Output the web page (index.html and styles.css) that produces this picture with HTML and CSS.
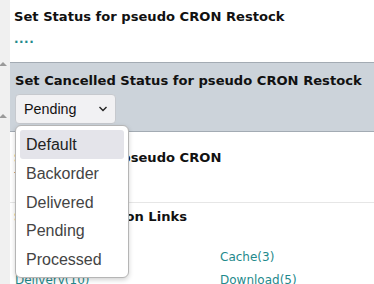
FILE: index.html
```html
<!DOCTYPE html>
<html>
<head>
<meta charset="utf-8">
<link rel="stylesheet" href="styles.css">
</head>
<body>
<div class="page">
  <aside class="strip">
    <span class="tri tri-a"></span>
    <span class="tri tri-b"></span>
  </aside>
  <main class="main">
    <section class="sec sec-1">
      <h3 class="title">Set Status for pseudo CRON Restock</h3>
      <div class="dots">....</div>
    </section>
    <section class="sec sec-2">
      <h3 class="title">Set Cancelled Status for pseudo CRON Restock</h3>
      <div class="select-wrap">
        <div class="select">
          <span>Pending</span>
          <svg class="chev" width="10" height="6" viewBox="0 0 10 6"><path d="M1.5 1 L5 4.5 L8.5 1" fill="none" stroke="#222" stroke-width="1.4"/></svg>
        </div>
        <ul class="menu">
          <li class="opt active">Default</li>
          <li class="opt">Backorder</li>
          <li class="opt">Delivered</li>
          <li class="opt">Pending</li>
          <li class="opt">Processed</li>
        </ul>
      </div>
    </section>
    <section class="sec sec-3">
      <h3 class="title">Set Status for pseudo CRON</h3>
      <div class="mark">-</div>
    </section>
    <section class="sec sec-4">
      <h3 class="title">Set Configuration Links</h3>
      <div class="links">
        <a class="lnk" href="#">Backorder(2)</a>
        <a class="lnk" href="#">Cache(3)</a>
        <a class="lnk" href="#">Delivery(10)</a>
        <a class="lnk" href="#">Download(5)</a>
      </div>
    </section>
  </main>
</div>
</body>
</html>
```
FILE: styles.css
```css
html, body {
  margin: 0;
  padding: 0;
  background: #ffffff;
  overflow: hidden;
}
.page {
  display: flex;
  width: 374px;
  height: 284px;
  overflow: hidden;
}
.strip {
  width: 10px;
  flex: none;
  background: #f0f0f0;
  display: flex;
  flex-direction: column;
}
.tri {
  display: block;
  width: 0;
  height: 0;
  border-left: 4px solid transparent;
  border-right: 4px solid transparent;
  border-bottom: 4px solid #9a9a9a;
  margin-left: -1px;
}
.tri-a { margin-top: 62px; }
.tri-b { margin-top: 48px; }
.main {
  flex: 1;
  min-width: 0;
}
.sec {
  box-sizing: border-box;
  padding-left: 4px;
}
.title {
  margin: 0;
  font-family: "DejaVu Sans", Verdana, sans-serif;
  font-weight: bold;
  font-size: 13.1px;
  line-height: 16px;
  color: #111;
  white-space: nowrap;
}
.sec-1 {
  height: 62px;
  padding-top: 9px;
}
.dots {
  font-family: "DejaVu Sans", sans-serif;
  font-weight: bold;
  font-size: 12px;
  color: #1f8a8c;
  line-height: 12px;
  margin-top: 8px;
  letter-spacing: 0.5px;
}
.sec-2 {
  height: 70px;
  background: #ccd3da;
  border-top: 1px solid #a3abb3;
  border-bottom: 1px solid #a3abb3;
  padding-top: 10px;
  padding-left: 5px;
}
.select-wrap {
  position: relative;
  margin-top: 5px;
  width: 101px;
}
.select {
  box-sizing: border-box;
  width: 101px;
  height: 30px;
  background: #f1f1f3;
  border: 1px solid #c6c9ce;
  border-radius: 4px;
  display: flex;
  align-items: center;
  justify-content: space-between;
  padding: 0 7px 0 8px;
  font-family: "Liberation Sans", Arial, sans-serif;
  font-size: 14.3px;
  color: #111;
}
.chev { display: block; }
.menu {
  position: absolute;
  left: 0;
  top: 31px;
  width: 114px;
  box-sizing: border-box;
  margin: 0;
  padding: 4px 4px 3px;
  list-style: none;
  background: #fff;
  border: 1px solid #b5b5b5;
  border-radius: 6px;
  box-shadow: 0 2px 5px rgba(0,0,0,0.18);
  z-index: 5;
}
.opt {
  height: 28.8px;
  line-height: 29px;
  padding-left: 6px;
  font-family: "Liberation Sans", Arial, sans-serif;
  font-size: 16px;
  color: #444;
  border-radius: 3px;
}
.opt.active {
  background: #e4e4ea;
  color: #222;
}
.sec-3 {
  height: 71px;
  padding-top: 18px;
  border-bottom: 1px solid #e6e6e6;
}
.mark {
  font-family: "DejaVu Sans", sans-serif;
  font-size: 10px;
  color: #444;
}
.sec-4 {
  padding-top: 6px;
}
.links {
  display: grid;
  grid-template-columns: 205px 1fr;
  row-gap: 8px;
  margin-top: 25px;
  padding-left: 1px;
}
.lnk {
  font-family: "DejaVu Sans", Verdana, sans-serif;
  font-size: 12px;
  line-height: 15px;
  color: #1f8a8c;
  text-decoration: none;
}
```
